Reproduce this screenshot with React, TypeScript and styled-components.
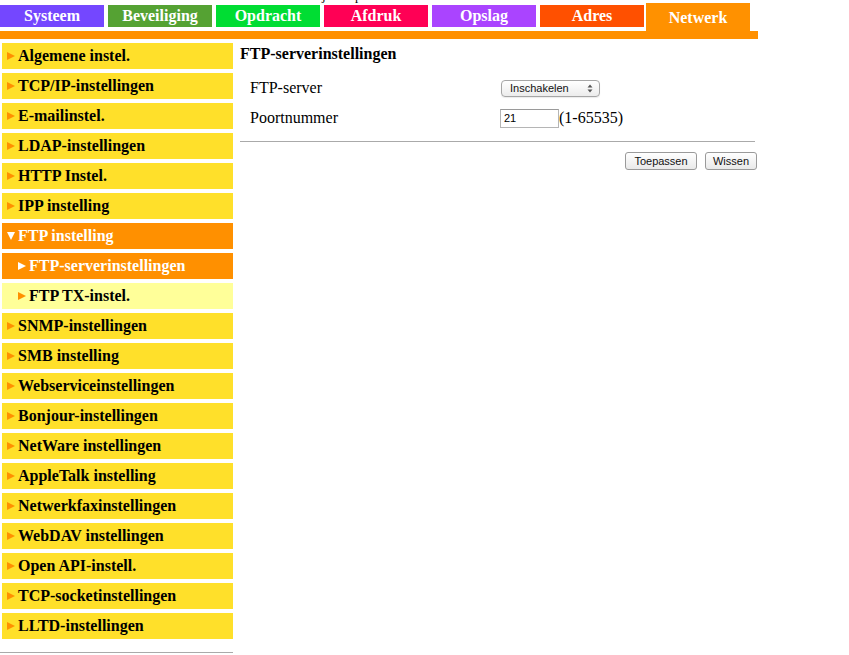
import React from "react";
import styled, { createGlobalStyle } from "styled-components";

const Global = createGlobalStyle`
  html, body { margin: 0; padding: 0; background: #fff; }
  body { font-family: "Liberation Serif", "Times New Roman", serif; color: #000; }
`;

const Page = styled.div`
  width: 849px;
  height: 655px;
  overflow: hidden;
  position: relative;
`;

const TopLinks = styled.div`
  position: absolute;
  top: -12px;
  left: 0;
  width: 849px;
  height: 16px;
  font-size: 13px;
  line-height: 16px;
`;

const TopGlyph = styled.span<{ $x: number }>`
  position: absolute;
  left: ${(p) => p.$x}px;
  top: 0;
`;

const TabRow = styled.div`
  display: flex;
  align-items: flex-end;
  height: 31px;
  width: 758px;
`;

const Tab = styled.div<{ $bg: string; $active?: boolean }>`
  width: 104px;
  height: ${(p) => (p.$active ? "28px" : "22px")};
  margin-right: ${(p) => (p.$active ? "0" : "4px")};
  margin-left: ${(p) => (p.$active ? "-2px" : "0")};
  margin-bottom: ${(p) => (p.$active ? "0" : "4px")};
  background: ${(p) => p.$bg};
  color: #fff;
  font-weight: bold;
  font-size: 16px;
  display: flex;
  align-items: center;
  justify-content: center;
  padding-top: ${(p) => (p.$active ? "2px" : "0")};
  box-sizing: border-box;
`;

const OrangeBar = styled.div`
  width: 758px;
  height: 8px;
  background: #ff9000;
`;

const Main = styled.div`
  display: flex;
`;

const Sidebar = styled.div`
  width: 234px;
  padding-top: 4px;
  flex: none;
`;

const Item = styled.div<{ $bg: string; $color: string; $sub?: boolean }>`
  margin-left: 2px;
  width: 231px;
  height: 26px;
  margin-bottom: 4px;
  background: ${(p) => p.$bg};
  color: ${(p) => p.$color};
  font-weight: bold;
  font-size: 16px;
  display: flex;
  align-items: center;
  padding-left: ${(p) => (p.$sub ? "16px" : "5px")};
  box-sizing: border-box;
  white-space: nowrap;
`;

const Arrow = styled.span<{ $color: string }>`
  width: 0;
  height: 0;
  border-top: 4px solid transparent;
  border-bottom: 4px solid transparent;
  border-left: 8px solid ${(p) => p.$color};
  margin-left: 0px;
  margin-right: 3px;
  flex: none;
`;

const DownArrow = styled.span`
  width: 0;
  height: 0;
  border-left: 4px solid transparent;
  border-right: 4px solid transparent;
  border-top: 8px solid #fff;
  margin-right: 3px;
  flex: none;
`;

const BottomLine = styled.div`
  width: 233px;
  height: 1px;
  background: #aaa;
  margin-top: 13px;
`;

const Content = styled.div`
  margin-left: 6px;
  padding-top: 6px;
  width: 518px;
`;

const Heading = styled.div`
  font-weight: bold;
  font-size: 16px;
  line-height: 18px;
  height: 18px;
`;

const Form = styled.div`
  display: grid;
  grid-template-columns: 250px auto;
  grid-auto-rows: 30px;
  margin-top: 10px;
  padding-left: 10px;
`;

const Label = styled.div`
  font-size: 16px;
  display: flex;
  align-items: center;
`;

const Field = styled.div`
  display: flex;
  align-items: center;
  font-size: 16px;
`;

const SelectBox = styled.div`
  width: 99px;
  height: 17px;
  margin-left: 1px;
  box-sizing: border-box;
  border: 1px solid #a6a6a6;
  border-radius: 4px;
  background: linear-gradient(#ffffff, #ececec);
  font-family: "Liberation Sans", Arial, sans-serif;
  font-size: 11px;
  display: flex;
  align-items: center;
  justify-content: space-between;
  padding: 0 6px 0 8px;
  color: #111;
  box-shadow: 0 1px 1px rgba(0,0,0,0.08);
`;

const TextInput = styled.div`
  width: 59px;
  height: 19px;
  box-sizing: border-box;
  border: 1px solid #b5b5b5;
  border-top-color: #9a9a9a;
  font-family: "Liberation Sans", Arial, sans-serif;
  font-size: 11px;
  display: flex;
  align-items: center;
  padding-left: 3px;
  background: #fff;
`;

const Hr = styled.div`
  height: 1px;
  background: #aaa;
  width: 515px;
  margin-top: 8px;
`;

const Buttons = styled.div`
  display: flex;
  justify-content: flex-end;
  gap: 8px;
  margin-top: 10px;
  width: 517px;
`;

const Button = styled.div<{ $w: number }>`
  width: ${(p) => p.$w}px;
  height: 18px;
  box-sizing: border-box;
  border: 1px solid #9a9a9a;
  border-radius: 3px;
  background: linear-gradient(#ffffff, #e9e9e9);
  font-family: "Liberation Sans", Arial, sans-serif;
  font-size: 11px;
  display: flex;
  align-items: center;
  justify-content: center;
  color: #111;
`;

const tabs = [
  { t: "Systeem", c: "#7447ff" },
  { t: "Beveiliging", c: "#55a233" },
  { t: "Opdracht", c: "#00dd33" },
  { t: "Afdruk", c: "#ff0055" },
  { t: "Opslag", c: "#aa44ff" },
  { t: "Adres", c: "#ff5000" },
];

const itemsTop = [
  "Algemene instel.",
  "TCP/IP-instellingen",
  "E-mailinstel.",
  "LDAP-instellingen",
  "HTTP Instel.",
  "IPP instelling",
];
const itemsBottom = [
  "SNMP-instellingen",
  "SMB instelling",
  "Webserviceinstellingen",
  "Bonjour-instellingen",
  "NetWare instellingen",
  "AppleTalk instelling",
  "Netwerkfaxinstellingen",
  "WebDAV instellingen",
  "Open API-instell.",
  "TCP-socketinstellingen",
  "LLTD-instellingen",
];

const YELLOW = "#ffe02a";
const ORANGE = "#ff9000";

export default function App() {
  return (
    <Page>
      <Global />
      <TopLinks>
        <TopGlyph $x={322}>j</TopGlyph>
        <TopGlyph $x={355}>p</TopGlyph>
      </TopLinks>
      <TabRow>
        {tabs.map((t) => (
          <Tab key={t.t} $bg={t.c}>{t.t}</Tab>
        ))}
        <Tab $bg="#ff9100" $active>Netwerk</Tab>
      </TabRow>
      <OrangeBar />
      <Main>
        <Sidebar>
          {itemsTop.map((i) => (
            <Item key={i} $bg={YELLOW} $color="#000">
              <Arrow $color={ORANGE} />
              {i}
            </Item>
          ))}
          <Item $bg={ORANGE} $color="#fff">
            <DownArrow />
            FTP instelling
          </Item>
          <Item $bg={ORANGE} $color="#fff" $sub>
            <Arrow $color="#fff" />
            FTP-serverinstellingen
          </Item>
          <Item $bg="#ffff99" $color="#000" $sub>
            <Arrow $color={ORANGE} />
            FTP TX-instel.
          </Item>
          {itemsBottom.map((i) => (
            <Item key={i} $bg={YELLOW} $color="#000">
              <Arrow $color={ORANGE} />
              {i}
            </Item>
          ))}
          <BottomLine />
        </Sidebar>
        <Content>
          <Heading>FTP-serverinstellingen</Heading>
          <Form>
            <Label>FTP-server</Label>
            <Field>
              <SelectBox>
                <span>Inschakelen</span>
                <svg width="6" height="9" viewBox="0 0 6 9">
                  <path d="M0.5 3.5 L3 0.5 L5.5 3.5 Z" fill="#555" />
                  <path d="M0.5 5.5 L3 8.5 L5.5 5.5 Z" fill="#555" />
                </svg>
              </SelectBox>
            </Field>
            <Label>Poortnummer</Label>
            <Field>
              <TextInput>21</TextInput>
              <span>(1-65535)</span>
            </Field>
          </Form>
          <Hr />
          <Buttons>
            <Button $w={72}>Toepassen</Button>
            <Button $w={52}>Wissen</Button>
          </Buttons>
        </Content>
      </Main>
    </Page>
  );
}
